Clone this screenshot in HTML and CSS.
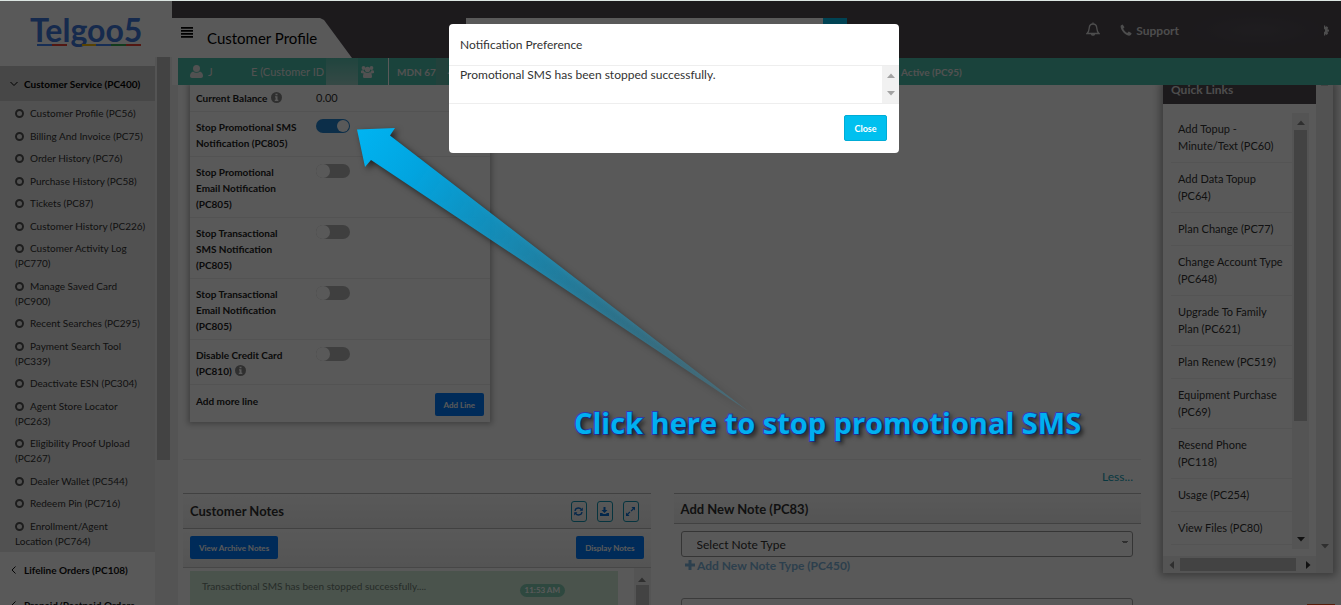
FILE: index.html
```
<!DOCTYPE html>
<html lang="en">
<head>
  <meta charset="UTF-8">
  <meta name="viewport" content="width=device-width, initial-scale=1.0">
  <title>Customer Profile | Telgoo5</title>
  <link rel="stylesheet" href="styles.css">
</head>
<body>

  <div class="app">
    <aside class="sidebar">
      <div class="logo">
        <span class="logo-text">Telgoo5</span>
        <span class="logo-line"><i class="b"></i><i class="r"></i><i class="gap"></i><i class="y"></i><i class="b"></i><i class="g"></i><i class="r"></i></span>
      </div>
      <div class="side-scroll">
        <nav class="menu">
          <a class="menu-head active" href="#">
            <svg width="8" height="8" viewBox="0 0 8 8"><path d="M0.5 2l3.5 3.5L7.500 2" fill="none" stroke="currentColor"/></svg>
            Customer Service (PC400)
          </a>
          <ul class="submenu">
            <li><a href="#">Customer Profile (PC56)</a></li>
            <li><a href="#">Billing And Invoice (PC75)</a></li>
            <li><a href="#">Order History (PC76)</a></li>
            <li><a href="#">Purchase History (PC58)</a></li>
            <li><a href="#">Tickets (PC87)</a></li>
            <li><a href="#">Customer History (PC226)</a></li>
            <li><a href="#">Customer Activity Log<br>(PC770)</a></li>
            <li><a href="#">Manage Saved Card<br>(PC900)</a></li>
            <li><a href="#">Recent Searches (PC295)</a></li>
            <li><a href="#">Payment Search Tool<br>(PC339)</a></li>
            <li><a href="#">Deactivate ESN (PC304)</a></li>
            <li><a href="#">Agent Store Locator<br>(PC263)</a></li>
            <li><a href="#">Eligibility Proof Upload<br>(PC267)</a></li>
            <li><a href="#">Dealer Wallet (PC544)</a></li>
            <li><a href="#">Redeem Pin (PC716)</a></li>
            <li><a href="#">Enrollment/Agent<br>Location (PC764)</a></li>
          </ul>
          <a class="menu-head" href="#">
            <svg width="8" height="8" viewBox="0 0 8 8"><path d="M5.500 0.500L2 4l3.500 3.500" fill="none" stroke="currentColor"/></svg>
            Lifeline Orders (PC108)
          </a>
          <a class="menu-head" href="#">
            <svg width="8" height="8" viewBox="0 0 8 8"><path d="M5.500 0.500L2 4l3.500 3.500" fill="none" stroke="currentColor"/></svg>
            Prepaid/Postpaid Orders
          </a>
        </nav>
        <div class="side-bar"><div class="thumb"></div></div>
      </div>
    </aside>

    <div class="main">
      <header class="topbar">
        <div class="tab">
          <button class="burger" type="button" aria-label="Menu"><i></i><i></i><i></i><i></i></button>
          <h1>Customer Profile</h1>
        </div>
        <form class="search">
          <input type="text" aria-label="Search">
          <button type="button" aria-label="Search"></button>
        </form>
        <div class="top-links">
          <a href="#" aria-label="Alerts">
            <svg width="14" height="14" viewBox="0 0 14 14"><path d="M1 11.500c2-1.500 2-3 2.200-5.500C3.400 3.300 5 2 7 2s3.600 1.300 3.800 4c.2 2.500.2 4 2.200 5.500zM7 2V.5M5.500 12c.3 1.400 2.700 1.400 3 0" fill="none" stroke="currentColor" stroke-width="1.300"/></svg>
          </a>
          <a href="#" class="support">
            <svg width="12" height="12" viewBox="0 0 12 12"><path d="M2.600.4L.8 1.500C-.4 4.500 4.500 11.500 9 11.700c1.200 0 2.500-1 2.600-2.500L8.800 7.600 7.300 9C5.500 8.300 3.600 6.200 3.200 4.600l1.300-1.300z" fill="currentColor"/></svg>
            Support
          </a>
          <span class="account"></span>
          <svg class="gear" width="5" height="11" viewBox="0 0 5 11"><path d="M0 .5h1.200v1.600l1.600-.9 1.400 1.600-.9 1.500 1.700.4v1.700l-1.700.4.9 1.500-1.400 1.600-1.600-.9v1.500H0V7.300a2 2 0 0 0 0-3.600z" fill="currentColor"/></svg>
        </div>
      </header>

      <div class="infobar">
        <div class="info-name">
          <svg width="13" height="13" viewBox="0 0 13 13"><circle cx="6.500" cy="3.500" r="3.500" fill="currentColor"/><path d="M3 6.500c-2 .5-3 2.500-3 4.500 0 1.300.8 2 2 2h9c1.200 0 2-.7 2-2 0-2-1-4-3-4.500-2 1.700-5 1.700-7 0z" fill="currentColor"/></svg>
          <span class="first">J</span>
          <span class="id">E (Customer ID</span>
          <i class="mask"></i>
          <svg width="13" height="12" viewBox="0 0 13 12"><g fill="currentColor"><circle cx="2.500" cy="2" r="1.900"/><circle cx="10.500" cy="2" r="1.900"/><circle cx="6.500" cy="3.500" r="2.700"/><path d="M0 7V5.500C0 4.500 1 4 2.500 4.300L4 6.500 2.500 7.500zM13 7V5.500c0-1-1-1.500-2.500-1.200L9 6.500l1.500 1zM2 10.500C2 8 3 6.300 4.500 6.300c1.300.8 2.700.8 4 0C10 6.300 11 8 11 10.500c0 1-.7 1.500-1.500 1.500h-6c-.8 0-1.500-.5-1.500-1.500z"/></g></svg>
        </div>
        <div class="info-mdn">MDN 67<i class="mask"></i>4</div>
        <div class="info-status">Active (PC95)</div>
      </div>

      <div class="content">
        <div class="workspace">
          <section class="card">
            <div class="row balance">
              <span class="label">Current Balance
                <svg class="info" width="11" height="11" viewBox="0 0 11 11"><circle cx="5.500" cy="5.500" r="5.500" fill="#888"/><path d="M4.500 1.800h2v1.500h-2zM4 4.300h2.500v3.500H7.300V9H3.800V7.800h.8V5.400H4z" fill="#fff"/></svg>
              </span>
              <span>0.00</span>
            </div>
            <div class="row">
              <label class="label" for="promoSms">Stop Promotional SMS<br>Notification (PC805)</label>
              <input class="switch" type="checkbox" id="promoSms" checked>
            </div>
            <div class="row">
              <label class="label" for="promoEmail">Stop Promotional<br>Email Notification<br>(PC805)</label>
              <input class="switch" type="checkbox" id="promoEmail">
            </div>
            <div class="row">
              <label class="label" for="transSms">Stop Transactional<br>SMS Notification<br>(PC805)</label>
              <input class="switch" type="checkbox" id="transSms">
            </div>
            <div class="row">
              <label class="label" for="transEmail">Stop Transactional<br>Email Notification<br>(PC805)</label>
              <input class="switch" type="checkbox" id="transEmail">
            </div>
            <div class="row">
              <label class="label" for="creditCard">Disable Credit Card<br>(PC810)
                <svg class="info" width="11" height="11" viewBox="0 0 11 11"><circle cx="5.500" cy="5.500" r="5.500" fill="#888"/><path d="M4.500 1.800h2v1.500h-2zM4 4.300h2.500v3.500H7.300V9H3.800V7.800h.8V5.400H4z" fill="#fff"/></svg>
              </label>
              <input class="switch" type="checkbox" id="creditCard">
            </div>
            <div class="row last">
              <span class="label">Add more line</span>
              <button class="btn" type="button">Add Line</button>
            </div>
          </section>

          <div class="less"><a href="#">Less...</a></div>

          <div class="panels">
            <section class="panel">
              <div class="panel-head">
                <h2>Customer Notes</h2>
                <div class="tools">
                  <button type="button" aria-label="Refresh"><svg width="9" height="9" viewBox="0 0 9 9"><path d="M1 4C1.200 2 2.700 1 4.500 1c1.300 0 2.300.6 3 1.600M8 5C7.800 7 6.300 8 4.500 8c-1.300 0-2.300-.6-3-1.600" fill="none" stroke="currentColor" stroke-width="1.300"/><path d="M8.800.5v3.200H5.600zM.2 8.500V5.300h3.200z" fill="currentColor"/></svg></button>
                  <button type="button" aria-label="Download"><svg width="9" height="9" viewBox="0 0 9 9"><path d="M3.500 0h2v3h2l-3 3-3-3h2zM0 6h2l1.500 1h2L7 6h2v3H0z" fill="currentColor"/></svg></button>
                  <button type="button" aria-label="Expand"><svg width="9" height="9" viewBox="0 0 9 9"><path d="M5.500 0H9v3.500L7.800 2.300 5.500 4.600l-.9-.9 2.200-2.300zM3.500 9H0V5.500l1.200 1.200 2.300-2.300.9.900-2.200 2.300z" fill="currentColor"/></svg></button>
                </div>
              </div>
              <div class="panel-actions">
                <button class="btn" type="button">View Archive Notes</button>
                <button class="btn" type="button">Display Notes</button>
              </div>
              <div class="notes">
                <div class="note">
                  <span>Transactional SMS has been stopped successfully....</span>
                  <span class="time">11:53 AM</span>
                </div>
                <div class="note-bar">
                  <svg width="8" height="5" viewBox="0 0 8 5"><path d="M0 5l4-4.500L8 5z" fill="#888"/></svg>
                  <div class="thumb"></div>
                </div>
              </div>
            </section>

            <section class="panel add-note">
              <div class="panel-head"><h2>Add New Note (PC83)</h2></div>
              <div class="select-wrap">
                <select aria-label="Note type">
                  <option>Select Note Type</option>
                </select>
              </div>
              <a class="add-type" href="#">
                <svg width="10" height="10" viewBox="0 0 10 10"><path d="M3.500 0h3v3.500H10v3H6.500V10h-3V6.500H0v-3h3.500z" fill="currentColor"/></svg>
                Add New Note Type (PC450)
              </a>
              <textarea aria-label="Note"></textarea>
            </section>
          </div>
        </div>

        <aside class="quick">
          <div class="quick-main">
            <h2>Quick Links</h2>
            <div class="quick-list">
              <ul>
                <li><a href="#">Add Topup -<br>Minute/Text (PC60)</a></li>
                <li><a href="#">Add Data Topup<br>(PC64)</a></li>
                <li><a href="#">Plan Change (PC77)</a></li>
                <li><a href="#">Change Account Type<br>(PC648)</a></li>
                <li><a href="#">Upgrade To Family<br>Plan (PC621)</a></li>
                <li><a href="#">Plan Renew (PC519)</a></li>
                <li><a href="#">Equipment Purchase<br>(PC69)</a></li>
                <li><a href="#">Resend Phone<br>(PC118)</a></li>
                <li><a href="#">Usage (PC254)</a></li>
                <li><a href="#">View Files (PC80)</a></li>
              </ul>
              <div class="list-bar">
                <svg width="8" height="5" viewBox="0 0 8 5"><path d="M0 5l4-4.500L8 5z" fill="#888"/></svg>
                <div class="thumb"></div>
                <svg class="end" width="8" height="5" viewBox="0 0 8 5"><path d="M0 0l4 4.500L8 0z" fill="#333"/></svg>
              </div>
            </div>
            <div class="h-bar">
              <svg width="5" height="8" viewBox="0 0 5 8"><path d="M5 0L.5 4 5 8z" fill="#888"/></svg>
              <div class="thumb"></div>
              <svg class="end" width="5" height="8" viewBox="0 0 5 8"><path d="M0 0l4.500 4L0 8z" fill="#333"/></svg>
            </div>
          </div>
          <div class="quick-bar">
            <div class="thumb"></div>
            <svg width="8" height="5" viewBox="0 0 8 5"><path d="M0 0l4 4.500L8 0z" fill="#888"/></svg>
          </div>
        </aside>
      </div>
    </div>
  </div>

  <a class="chat" href="#" aria-label="Chat"></a>

  <div class="backdrop">
    <div class="modal" role="dialog" aria-labelledby="modalTitle">
      <div class="modal-head" id="modalTitle">Notification Preference</div>
      <div class="modal-body">
        <p>Promotional SMS has been stopped successfully.</p>
        <div class="modal-bar">
          <svg width="8" height="5" viewBox="0 0 8 5"><path d="M0 5l4-4.500L8 5z" fill="#a3a3a3"/></svg>
          <svg width="8" height="5" viewBox="0 0 8 5"><path d="M0 0l4 4.500L8 0z" fill="#a3a3a3"/></svg>
        </div>
      </div>
      <div class="modal-foot"><button type="button">Close</button></div>
    </div>
  </div>

  <!-- hint arrow and caption -->
  <svg class="arrow" width="410" height="300" viewBox="0 0 410 300">
    <defs>
      <linearGradient id="fade" gradientUnits="userSpaceOnUse" x1="7" y1="9" x2="398" y2="292">
        <stop offset="0" stop-color="#00b4f2"/>
        <stop offset="0.150" stop-color="#02a4df"/>
        <stop offset="1" stop-color="#3a8ca8" stop-opacity="0.350"/>
      </linearGradient>
    </defs>
    <path d="M7 9.500L45 8l-5 7.500L398 291 21 40l-6 7z" fill="url(#fade)"/>
  </svg>
  <div class="caption">Click here to stop promotional SMS</div>

</body>
</html>
```
FILE: styles.css
```
*, *::before {
  box-sizing: border-box;
}
body {
  margin: 0;
  height: 100vh;
  overflow: hidden;
  border-top: 1px solid #dce6e2;
  background: #fff;
  color: #333;
  font-family: Lato, "Open Sans", sans-serif;
  font-size: 12px;
}
a {
  color: inherit;
  text-decoration: none;
}
ul, h1, h2, p {
  margin: 0;
  padding: 0;
  list-style: none;
}
button, input, select, textarea {
  font-family: inherit;
}
button {
  cursor: pointer;
}
.app {
  display: flex;
  height: 100%;
}

/* sidebar */
.sidebar {
  width: 172px;
  flex: none;
  display: flex;
  flex-direction: column;
  background: #fff;
}
.logo {
  height: 56px;
  padding: 9px 0 0 30px;
  flex: none;
}
.logo-text {
  display: block;
  height: 33px;
  color: #3f79dc;
  font-size: 32px;
  font-weight: bold;
  line-height: 40px;
}
.logo-line {
  display: flex;
  width: 104px;
  height: 2px;
  margin: 1px 0 0 7px;
}
.logo-line i {
  flex: 1;
}
.logo-line .b { background: #4285f4; }
.logo-line .r { background: #ea4335; }
.logo-line .y { background: #fbbc05; }
.logo-line .g { background: #34a853; }
.side-scroll {
  flex: 1;
  min-height: 0;
  display: flex;
}
.menu {
  flex: 1;
  padding-top: 9px;
  overflow: hidden;
}
.menu-head {
  display: flex;
  align-items: center;
  gap: 6px;
  height: 35px;
  padding-left: 10px;
  color: #111;
  font-size: 10px;
  font-weight: bold;
  white-space: nowrap;
}
.menu-head.active {
  background: #ccc;
  color: #000;
}
.submenu {
  height: 451px;
  padding: 5px 0 3px;
  display: flex;
  flex-direction: column;
  justify-content: space-between;
  background: #e8e8e8;
}
.submenu a {
  display: block;
  padding-left: 15px;
  font-size: 10px;
  line-height: 15px;
}
.submenu a::before {
  content: "";
  display: inline-block;
  width: 9px;
  height: 9px;
  margin-right: 6px;
  border: 2px solid #555;
  border-radius: 50%;
  vertical-align: -1px;
}
.side-bar {
  width: 17px;
  padding: 0 2px;
  background: #f1f1f1;
}
.side-bar .thumb {
  height: 403px;
}
.thumb {
  background: #c1c1c1;
}

/* header */
.main {
  flex: 1;
  min-width: 0;
  display: flex;
  flex-direction: column;
}
.topbar {
  display: flex;
  height: 57px;
  flex: none;
  padding-top: 17px;
  background: #504a52;
}
.tab {
  display: flex;
  width: 180px;
  padding-left: 9px;
  background: #fff;
  clip-path: polygon(0 0, 148px 0, 152px 2px, 180px 100%, 0 100%);
}
.tab h1 {
  padding: 10px 0 0 14px;
  color: #000;
  font-size: 15px;
  font-weight: normal;
  line-height: 20px;
}
.burger {
  display: flex;
  flex-direction: column;
  gap: 2px;
  width: 12px;
  height: 22px;
  padding: 9px 0 0;
  border: 0;
  background: none;
}
.burger i {
  height: 1px;
  width: 12px;
  background: #000;
  box-shadow: 0 1px #444;
}
.search {
  display: flex;
  width: 381px;
  height: 28px;
  margin-left: 114px;
}
.search input {
  flex: 1;
  border: 0;
  background: #fff;
}
.search button {
  width: 24px;
  border: 0;
  background: #00c0ef;
}
.top-links {
  display: flex;
  align-items: center;
  height: 24px;
  margin-left: auto;
  padding-right: 12px;
  color: #ddd;
}
.support {
  display: flex;
  align-items: center;
  gap: 4px;
  margin-left: 20px;
  font-weight: bold;
}
.account {
  width: 134px;
  height: 36px;
  margin-left: 11px;
  background: radial-gradient(closest-side, #58535b, #504a52);
}
.infobar {
  display: flex;
  height: 27px;
  flex: none;
  margin-left: 6px;
  line-height: 28px;
  background: #4abfab;
  color: #e8e8e8;
  white-space: nowrap;
}
.info-name {
  display: flex;
  align-items: center;
  width: 211px;
  padding-left: 12px;
  border-right: 1px solid #fff;
  font-size: 11px;
}
.info-name .first {
  width: 43px;
  margin-left: 5px;
}
.info-name .id {
  width: 75px;
}
.mask {
  height: 27px;
  flex: none;
  background: linear-gradient(#5cc4b2, #9ad2c8);
}
.info-name .mask {
  width: 32px;
  margin-right: 3px;
}
.info-mdn {
  display: flex;
  padding-left: 8px;
  width: 512px;
  font-size: 10px;
  font-weight: bold;
}
.info-mdn .mask {
  width: 12px;
  background: #63b9aa;
}
.info-status {
  font-size: 10px;
  font-weight: bold;
}

/* content */
.content {
  flex: 1;
  min-height: 0;
  display: flex;
  gap: 22px;
  padding: 0 8px 0 5px;
  border-left: 6px solid #f0f0f0;
  overflow: hidden;
}
.workspace {
  flex: 1;
  min-width: 0;
}
.card {
  width: 300px;
  margin-left: 7px;
  background: #fff;
  box-shadow: 0 0 6px 2px rgba(0, 0, 0, 0.3);
}
.row {
  display: flex;
  align-items: flex-start;
  padding: 7px 6px 5px;
  border-bottom: 1px solid #eee;
  font-size: 11px;
  line-height: 16px;
}
.row.balance {
  padding: 5px 6px;
}
.label {
  width: 120px;
  font-size: 10px;
  font-weight: bold;
  color: #222;
}
.info {
  margin-left: 1px;
  vertical-align: -1px;
}
.switch {
  appearance: none;
  width: 34px;
  height: 14px;
  margin: 0;
  border-radius: 7px;
  background: #b5b5b5;
}
.switch::before {
  content: "";
  display: block;
  width: 14px;
  height: 14px;
  border-radius: 50%;
  background: #fff;
}
.switch:checked {
  background: #2383d0;
}
.switch:checked::before {
  width: 12px;
  height: 12px;
  margin: 1px 0 0 21px;
  float: left;
}
.row.last {
  justify-content: space-between;
  padding: 8px 6px 6px;
  border: 0;
}
.btn {
  height: 23px;
  padding: 0 9px;
  border: 0;
  border-radius: 2px;
  background: #007bff;
  color: #fff;
  font-size: 8px;
  font-weight: bold;
}
.less {
  height: 34px;
  margin-top: 37px;
  padding: 8px 8px 0 0;
  border-top: 1px solid #eee;
  text-align: right;
  line-height: 18px;
  color: #17a2b8;
}
.panels {
  display: grid;
  grid-template-columns: 1fr 1fr;
  gap: 23px;
}
.panel-head {
  display: flex;
  justify-content: space-between;
  align-items: center;
  width: 100%;
  height: 36px;
  padding: 0 12px 0 7px;
  border-top: 1px solid #bbb;
  border-bottom: 1px solid #bbb;
  background: linear-gradient(#fff, #f0f0f0);
}
.panel-head h2 {
  font-size: 13px;
  line-height: 18px;
}
.tools {
  display: flex;
  gap: 10px;
}
.tools button {
  width: 16px;
  height: 21px;
  padding: 0;
  border: 1px solid #1296b4;
  border-radius: 3px;
  background: none;
  color: #0b6fd6;
}
.panel-actions {
  display: flex;
  justify-content: space-between;
  padding: 7px 7px 8px;
  border-bottom: 1px solid #ccc;
  background: linear-gradient(#fff, #f0f0f0);
}
.notes {
  display: flex;
  justify-content: space-between;
  padding-left: 7px;
}
.note {
  display: flex;
  justify-content: space-between;
  width: 428px;
  height: 60px;
  margin-top: 3px;
  padding: 6px 53px 0 12px;
  background: #d4edda;
  color: #6f7f75;
  font-size: 10px;
  line-height: 18px;
}
.time {
  height: 13px;
  margin-top: 7px;
  padding: 0 5px;
  border-radius: 7px;
  background: #84cdb4;
  color: #fff;
  font-size: 8px;
  font-weight: bold;
  line-height: 13px;
}
.note-bar {
  width: 17px;
  padding: 2px;
  background: #f1f1f1;
  text-align: center;
}
.note-bar .thumb {
  height: 40px;
}
.add-note {
  display: flex;
  flex-direction: column;
  align-items: flex-start;
}
.add-note .panel-head {
  height: 31px;
}
.select-wrap {
  width: 100%;
  padding: 7px 8px 0 7px;
}
.select-wrap select {
  appearance: none;
  width: 100%;
  height: 26px;
  padding: 0 15px;
  border: 1px solid #999;
  border-radius: 3px;
  background:
    linear-gradient(45deg, transparent 50%, #888 0) right 7px top 9px / 3px 3px no-repeat,
    linear-gradient(-45deg, transparent 50%, #888 0) right 4px top 9px / 3px 3px no-repeat;
  color: #333;
  font-size: 12px;
}
.add-type {
  padding-left: 11px;
  color: #7fb6dc;
  font-size: 12px;
  font-weight: bold;
  line-height: 18px;
}
.add-note textarea {
  width: calc(100% - 15px);
  height: 60px;
  margin: 23px 0 0 7px;
  border: 1px solid #aaa;
  border-radius: 3px;
  resize: none;
}

/* quick links */
.quick {
  display: flex;
  width: 170px;
  height: 488px;
  flex: none;
  background: #fff;
  box-shadow: 0 0 8px 3px rgba(0, 0, 0, 0.35);
}
.quick-main {
  flex: 1;
  display: flex;
  flex-direction: column;
}
.quick h2 {
  height: 19px;
  padding-left: 8px;
  background: #504a52;
  color: #ddd;
  font-size: 12px;
  line-height: 10px;
}
.quick-list {
  flex: 1;
  display: flex;
  padding: 9px 7px 7px 8px;
}
.quick-list ul {
  flex: 1;
}
.quick-list li {
  padding: 7px 0 8px 7px;
  border-bottom: 1px solid #f0f0f0;
  font-size: 11px;
  line-height: 17px;
  white-space: nowrap;
}
.list-bar {
  display: flex;
  flex-direction: column;
  align-items: center;
  width: 17px;
  padding: 7px 0;
  background: #f1f1f1;
}
.list-bar .thumb {
  width: 13px;
  height: 291px;
  margin-top: 5px;
}
.end {
  margin-top: auto;
}
.h-bar {
  display: flex;
  align-items: center;
  height: 17px;
  padding: 0 5px 0 6px;
  background: #f1f1f1;
}
.h-bar .thumb {
  width: 116px;
  height: 13px;
  margin-left: 6px;
}
.h-bar .end {
  margin: 0 0 0 auto;
}
.quick-bar {
  display: flex;
  flex-direction: column;
  align-items: center;
  justify-content: space-between;
  width: 17px;
  padding-bottom: 24px;
  background: #ececec;
}
.quick-bar .thumb {
  width: 7px;
  height: 1px;
}
.chat {
  position: absolute;
  right: 6px;
  bottom: 0;
  width: 28px;
  height: 1px;
  background: #f4511e;
}

/* modal */
.backdrop {
  position: absolute;
  inset: 1px 0 0;
  padding: 23px 0 0 7px;
  background: rgba(0, 0, 0, 0.65);
}
.modal {
  width: 450px;
  margin: 0 auto;
  border-radius: 4px;
  background: #fff;
}
.modal-head {
  padding: 10px 11px;
  line-height: 21px;
}
.modal-body {
  display: flex;
  height: 39px;
  padding-left: 11px;
  border-top: 1px solid #eee;
  border-bottom: 1px solid #eee;
}
.modal-body p {
  flex: 1;
  line-height: 18px;
}
.modal-bar {
  display: flex;
  flex-direction: column;
  align-items: center;
  justify-content: space-between;
  width: 17px;
  padding: 7px 0;
  background: #f1f1f1;
}
.modal-foot {
  display: flex;
  justify-content: flex-end;
  padding: 11px 12px 12px;
}
.modal-foot button {
  width: 43px;
  height: 26px;
  padding: 0;
  border: 1px solid #00acd6;
  border-radius: 2px;
  background: #00c0ef;
  color: #fff;
  font-size: 9px;
  font-weight: bold;
}
.arrow {
  position: absolute;
  left: 350px;
  top: 120px;
  filter: drop-shadow(3px 3px 3px rgba(0, 0, 0, 0.6));
}
.caption {
  position: absolute;
  left: 574px;
  top: 404px;
  color: #00b0f0;
  font-family: "Open Sans", sans-serif;
  font-size: 29px;
  font-weight: bold;
  line-height: 38px;
  white-space: nowrap;
  -webkit-text-stroke: 2px #2f3bb0;
  paint-order: stroke fill;
  text-shadow: 3px 3px 4px rgba(0, 0, 0, 0.6);
}
```
